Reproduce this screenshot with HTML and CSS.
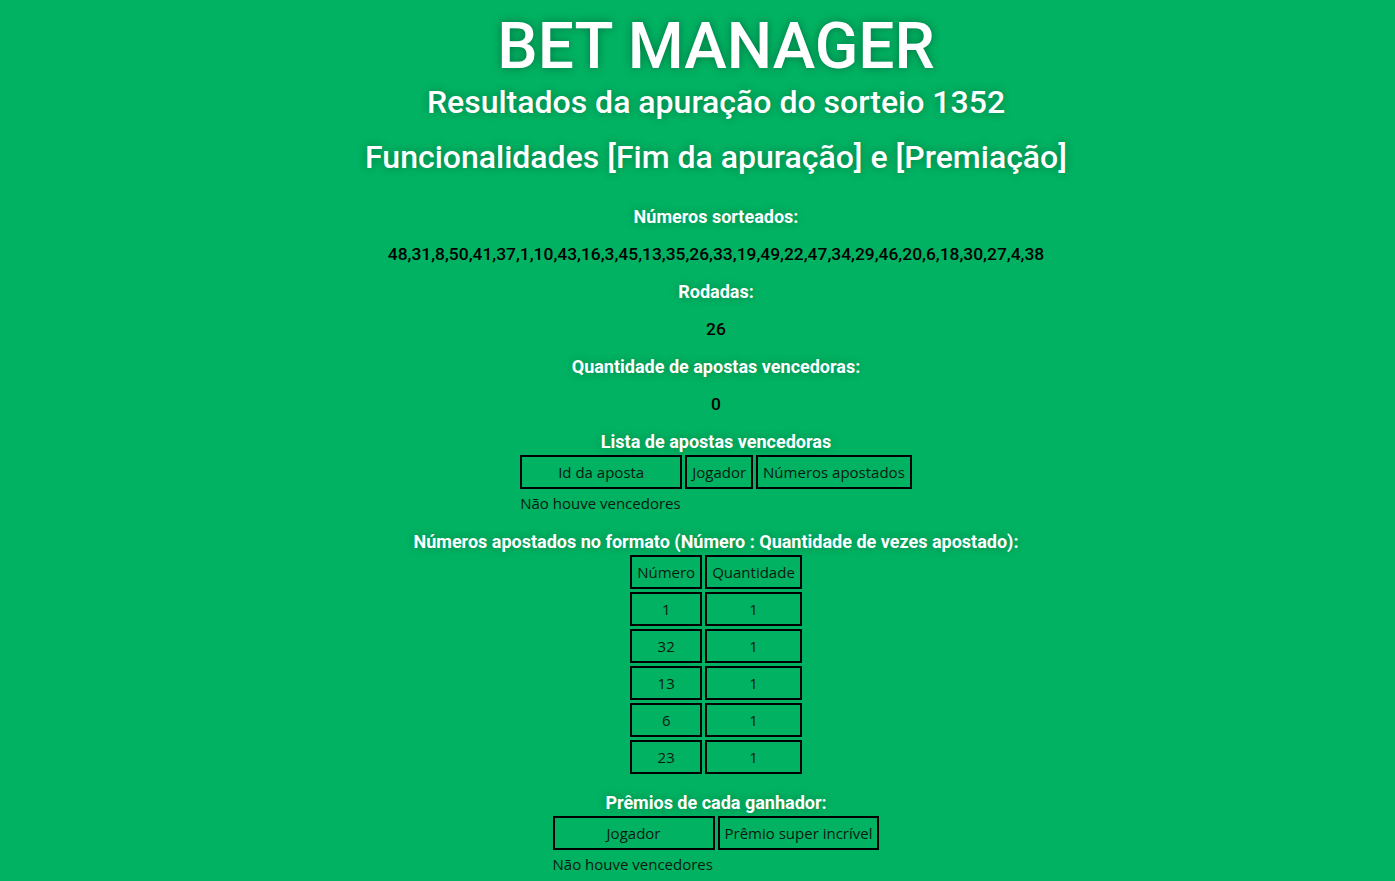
FILE: index.html
```html
<!DOCTYPE html>
<html lang="pt">
<head>
<meta charset="utf-8">
<title>Bet Manager</title>
<link rel="stylesheet" href="styles.css">
</head>
<body>
<main class="page">
  <h1 class="title">BET MANAGER</h1>
  <h2 class="subtitle">Resultados da apuração do sorteio 1352</h2>
  <h2 class="subtitle subtitle-second">Funcionalidades [Fim da apuração] e [Premiação]</h2>

  <p class="label">Números sorteados:</p>
  <p class="value">48,31,8,50,41,37,1,10,43,16,3,45,13,35,26,33,19,49,22,47,34,29,46,20,6,18,30,27,4,38</p>
  <p class="label">Rodadas:</p>
  <p class="value">26</p>
  <p class="label">Quantidade de apostas vencedoras:</p>
  <p class="value">0</p>

  <p class="label label-tight">Lista de apostas vencedoras</p>
  <div class="block">
    <table class="grid">
      <tr><th class="w-wide">Id da aposta</th><th>Jogador</th><th>Números apostados</th></tr>
    </table>
    <p class="empty">Não houve vencedores</p>
  </div>

  <p class="label label-tight">Números apostados no formato (Número : Quantidade de vezes apostado):</p>
  <div class="block">
    <table class="grid">
      <tr><th>Número</th><th>Quantidade</th></tr>
      <tr><td>1</td><td>1</td></tr>
      <tr><td>32</td><td>1</td></tr>
      <tr><td>13</td><td>1</td></tr>
      <tr><td>6</td><td>1</td></tr>
      <tr><td>23</td><td>1</td></tr>
    </table>
  </div>

  <p class="label label-tight">Prêmios de cada ganhador:</p>
  <div class="block">
    <table class="grid">
      <tr><th class="w-wide">Jogador</th><th>Prêmio super incrível</th></tr>
    </table>
    <p class="empty">Não houve vencedores</p>
  </div>
</main>
</body>
</html>
```
FILE: styles.css
```css
html, body {
  margin: 0;
  padding: 0;
  background: #00b262;
}
body {
  min-height: 881px;
}
.page {
  display: flex;
  flex-direction: column;
  align-items: center;
  padding-left: 37px;
  font-family: Roboto, "Liberation Sans", sans-serif;
  text-align: center;
}
.title {
  margin: 12px 0 0;
  font-size: 64px;
  line-height: 70px;
  font-weight: 500;
  color: #fff;
  text-shadow: 0 0 10px rgba(0, 0, 0, 0.35);
}
.subtitle {
  margin: 0;
  font-size: 32px;
  line-height: 40px;
  font-weight: 500;
  color: #fff;
  text-shadow: 0 0 8px rgba(0, 0, 0, 0.3);
}
.subtitle-second {
  margin: 15px 0 29px;
}
.label {
  margin: 0 0 16.5px;
  font-size: 18px;
  line-height: 21px;
  font-weight: 700;
  color: #fff;
  text-shadow: 0 0 8px rgba(0, 0, 0, 0.25);
}
.value {
  margin: 0 0 16.5px;
  font-size: 17.4px;
  line-height: 21px;
  font-weight: 500;
  color: #000;
}
.label-tight {
  margin-bottom: 0;
}
.block {
  display: flex;
  flex-direction: column;
  align-items: flex-start;
  margin-bottom: 15.5px;
}
.grid {
  border-spacing: 3px;
  border-collapse: separate;
  font-family: "Open Sans", "Noto Sans", sans-serif;
  font-size: 15px;
  color: #0b1a10;
}
.grid th,
.grid td {
  border: 2px solid #000;
  font-weight: 400;
  padding: 4px 5px;
  height: 22px;
  text-align: center;
}
.w-wide {
  width: 148px;
}
.empty {
  margin: 1px 0 2px 3px;
  font-family: "Open Sans", "Noto Sans", sans-serif;
  font-size: 15px;
  line-height: 20px;
  color: #0b1a10;
  text-align: left;
}
```
